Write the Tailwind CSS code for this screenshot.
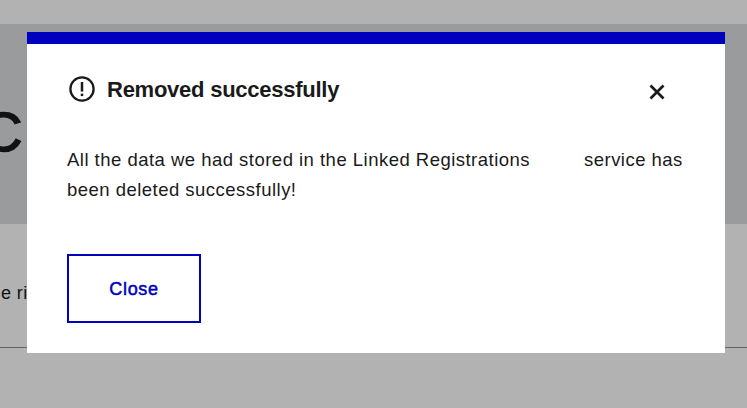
<!DOCTYPE html>
<html lang="en">
<head>
<meta charset="utf-8">
<title>Removed successfully</title>
<script src="https://cdn.jsdelivr.net/npm/@tailwindcss/browser@4"></script>
</head>
<body class="relative h-[408px] w-[747px] overflow-hidden bg-[#b2b2b2] font-['Liberation_Sans',sans-serif] text-[#1a1a1a]">
  <!-- Page behind the dialog -->
  <div class="flex h-full flex-col" aria-hidden="true">
    <div class="h-6 shrink-0"></div>
    <div class="h-[200px] shrink-0 overflow-hidden bg-[#9a9b9d] pt-[76px]">
      <div class="-ml-[18px] text-[56px] leading-[64px] font-normal text-[#121212] [-webkit-text-stroke:1.6px_#121212]">C</div>
    </div>
    <div class="h-[124px] shrink-0 border-b border-[#666666] pt-[57px]">
      <div class="pl-px text-[18px] leading-6 whitespace-nowrap text-[#121212]"><span class="tracking-[0.4px]">e ri</span></div>
    </div>
  </div>

  <section role="dialog" aria-labelledby="title" class="absolute top-8 left-[27px] flex h-[321px] w-[698px] flex-col border-t-12 border-[#0000bf] bg-white px-10">
    <header class="flex items-start pt-8">
      <svg class="mr-[11px] ml-[1px] size-7 shrink-0" viewBox="0 0 28 28" fill="none" stroke="#1a1a1a">
        <circle cx="14" cy="13" r="11.6" stroke-width="2.3"/>
        <path d="M14 6v9.6" stroke-width="2.5"/>
        <path d="M14 17.6v2.5" stroke-width="2.5"/>
      </svg>
      <h1 id="title" class="grow text-[22px] leading-[28px] font-bold tracking-[-0.25px] whitespace-nowrap">Removed successfully</h1>
      <button class="mt-[5px] mr-[17px]" aria-label="Close dialog">
        <svg class="size-[22px]" viewBox="0 0 22 22" fill="none" stroke="#1a1a1a" stroke-width="2.7"><path d="M4.5 4.5l13 13M17.5 4.5l-13 13"/></svg>
      </button>
    </header>
    <p class="mt-[41px] text-[18.5px] leading-[30px] whitespace-nowrap"><span class="inline-block w-[517px] tracking-[0.48px]">All the data we had stored in the Linked Registrations</span><span class="tracking-[0.48px]">service has</span><br><span class="tracking-[0.48px]">been deleted successfully!</span></p>
    <button class="mt-[49px] h-[69px] w-[134px] border-2 border-[#0000bf] pt-0.5 text-[18px] font-medium tracking-[0.7px] text-[#0000bf] [-webkit-text-stroke:0.5px_#0000bf]">Close</button>
  </section>
</body>
</html>
